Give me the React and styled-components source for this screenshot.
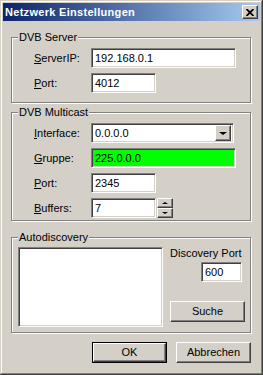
import React from "react";
import styled, { createGlobalStyle } from "styled-components";

const GlobalStyle = createGlobalStyle`
  html, body {
    margin: 0;
    padding: 0;
    background: #d4d0c8;
  }
  body {
    font-family: "Liberation Sans", Arial, sans-serif;
    font-size: 11px;
    color: #000;
  }
`;

const Window = styled.div`
  width: 263px;
  height: 375px;
  box-sizing: border-box;
  padding: 3px;
  background: #d4d0c8;
  box-shadow: inset -1px -1px #404040, inset 1px 1px #d4d0c8,
    inset -2px -2px #808080, inset 2px 2px #fff;
  display: flex;
  flex-direction: column;
`;

const TitleBar = styled.div`
  height: 18px;
  flex-shrink: 0;
  display: flex;
  align-items: center;
  justify-content: space-between;
  padding: 0 2px 0 2px;
  background: linear-gradient(to right, #0a246a, #a6caf0);
`;

const TitleText = styled.span`
  color: #fff;
  font-weight: bold;
  font-size: 11px;
  line-height: 13px;
  letter-spacing: 0.3px;
`;

const Bevel = `
  background: #d4d0c8;
  border: 1px solid;
  border-color: #fff #404040 #404040 #fff;
  box-shadow: inset -1px -1px #808080;
  box-sizing: border-box;
`;

const CloseButton = styled.div`
  ${Bevel}
  width: 16px;
  height: 14px;
  display: flex;
  align-items: center;
  justify-content: center;
`;

const Body = styled.div`
  display: flex;
  flex-direction: column;
  padding: 16px 8px 0 8px;
`;

const Group = styled.div`
  height: ${(p) => p.$h}px;
  margin-top: ${(p) => p.$mt || 0}px;
  margin-right: 1px;
  box-sizing: border-box;
  border: 1px solid #808080;
  box-shadow: 1px 1px 0 #fff, inset 1px 1px 0 #fff;
  display: flex;
  flex-direction: column;
`;

const GroupTitle = styled.div`
  align-self: flex-start;
  margin: -7px 0 0 6px;
  padding: 0 1px;
  line-height: 13px;
  background: #d4d0c8;
`;

const Rows = styled.div`
  display: flex;
  flex-direction: column;
  gap: 5px;
  padding: 4px 0 0 22px;
`;

const Row = styled.div`
  display: flex;
  align-items: center;
  height: 20px;
`;

const Label = styled.div`
  width: 57px;
  flex-shrink: 0;
  line-height: 13px;
`;

const Sunken = `
  box-sizing: border-box;
  border: 1px solid;
  border-color: #808080 #fff #fff #808080;
  box-shadow: inset 1px 1px #404040, inset -1px -1px #d4d0c8;
`;

const Field = styled.div`
  ${Sunken}
  width: ${(p) => p.$w}px;
  height: 20px;
  background: ${(p) => p.$bg || "#fff"};
  padding: 0 3px;
  line-height: 18px;
  white-space: nowrap;
`;

const Combo = styled.div`
  ${Sunken}
  width: ${(p) => p.$w}px;
  height: 20px;
  background: #fff;
  display: flex;
  align-items: center;
  padding: 2px;
`;

const ComboText = styled.div`
  flex: 1;
  padding-left: 1px;
  line-height: 16px;
`;

const ArrowButton = styled.div`
  ${Bevel}
  width: 16px;
  height: ${(p) => p.$h}px;
  display: flex;
  align-items: center;
  justify-content: center;
`;

const Triangle = styled.div`
  width: 0;
  height: 0;
  border-left: ${(p) => p.$s}px solid transparent;
  border-right: ${(p) => p.$s}px solid transparent;
  ${(p) =>
    p.$up
      ? `border-bottom: ${p.$s - 1}px solid #000;`
      : `border-top: ${p.$s - 1}px solid #000;`}
`;

const Spinner = styled.div`
  display: flex;
  flex-direction: column;
  margin-left: 1px;
`;

const Discovery = styled.div`
  display: flex;
  gap: 7px;
  padding: 3px 0 0 6px;
`;

const ListBox = styled.div`
  ${Sunken}
  width: 145px;
  height: 80px;
  background: #fff;
`;

const SideColumn = styled.div`
  width: 75px;
  height: 80px;
  display: flex;
  flex-direction: column;
`;

const SideLabel = styled.div`
  line-height: 13px;
`;

const SmallField = styled(Field)`
  align-self: flex-end;
  margin: 2px 3px 0 0;
`;

const Button = styled.div`
  ${Bevel}
  width: 75px;
  height: 21px;
  display: flex;
  align-items: center;
  justify-content: center;
  line-height: 13px;
`;

const SideButton = styled(Button)`
  margin: auto 0 5px 0;
`;

const DefaultButton = styled.div`
  width: 75px;
  height: 21px;
  box-sizing: border-box;
  border: 1px solid #000;
  display: flex;
`;

const DefaultInner = styled(Button)`
  width: 100%;
  height: 100%;
`;

const ButtonRow = styled.div`
  display: flex;
  justify-content: flex-end;
  gap: 9px;
  margin-top: 9px;
  padding-right: 1px;
`;

const CloseIcon = () => (
  <svg width="8" height="7" viewBox="0 0 8 7">
    <path d="M0.5 0 L7.5 7 M7.5 0 L0.5 7" stroke="#000" strokeWidth="1.8" />
  </svg>
);

const FieldRow = ({ label, k, children }) => (
  <Row>
    <Label>
      <u>{k}</u>
      {label}
    </Label>
    {children}
  </Row>
);

export default function App() {
  return (
    <>
      <GlobalStyle />
      <Window>
        <TitleBar>
          <TitleText>Netzwerk Einstellungen</TitleText>
          <CloseButton>
            <CloseIcon />
          </CloseButton>
        </TitleBar>
        <Body>
          <Group $h={66}>
            <GroupTitle>DVB Server</GroupTitle>
            <Rows>
              <FieldRow k="S" label="erverIP:">
                <Field $w={145}>192.168.0.1</Field>
              </FieldRow>
              <FieldRow k="P" label="ort:">
                <Field $w={65}>4012</Field>
              </FieldRow>
            </Rows>
          </Group>

          <Group $h={109} $mt={9}>
            <GroupTitle>DVB Multicast</GroupTitle>
            <Rows>
              <FieldRow k="I" label="nterface:">
                <Combo $w={143}>
                  <ComboText>0.0.0.0</ComboText>
                  <ArrowButton $h={16}>
                    <Triangle $s={4} />
                  </ArrowButton>
                </Combo>
              </FieldRow>
              <FieldRow k="G" label="ruppe:">
                <Field $w={145} $bg="#00ff00">
                  225.0.0.0
                </Field>
              </FieldRow>
              <FieldRow k="P" label="ort:">
                <Field $w={65}>2345</Field>
              </FieldRow>
              <FieldRow k="B" label="uffers:">
                <Field $w={65}>7</Field>
                <Spinner>
                  <ArrowButton $h={10}>
                    <Triangle $s={3} $up />
                  </ArrowButton>
                  <ArrowButton $h={10}>
                    <Triangle $s={3} />
                  </ArrowButton>
                </Spinner>
              </FieldRow>
            </Rows>
          </Group>

          <Group $h={96} $mt={16}>
            <GroupTitle>Autodiscovery</GroupTitle>
            <Discovery>
              <ListBox />
              <SideColumn>
                <SideLabel>Discovery Port</SideLabel>
                <SmallField $w={41}>600</SmallField>
                <SideButton>Suche</SideButton>
              </SideColumn>
            </Discovery>
          </Group>

          <ButtonRow>
            <DefaultButton>
              <DefaultInner>OK</DefaultInner>
            </DefaultButton>
            <Button>Abbrechen</Button>
          </ButtonRow>
        </Body>
      </Window>
    </>
  );
}
